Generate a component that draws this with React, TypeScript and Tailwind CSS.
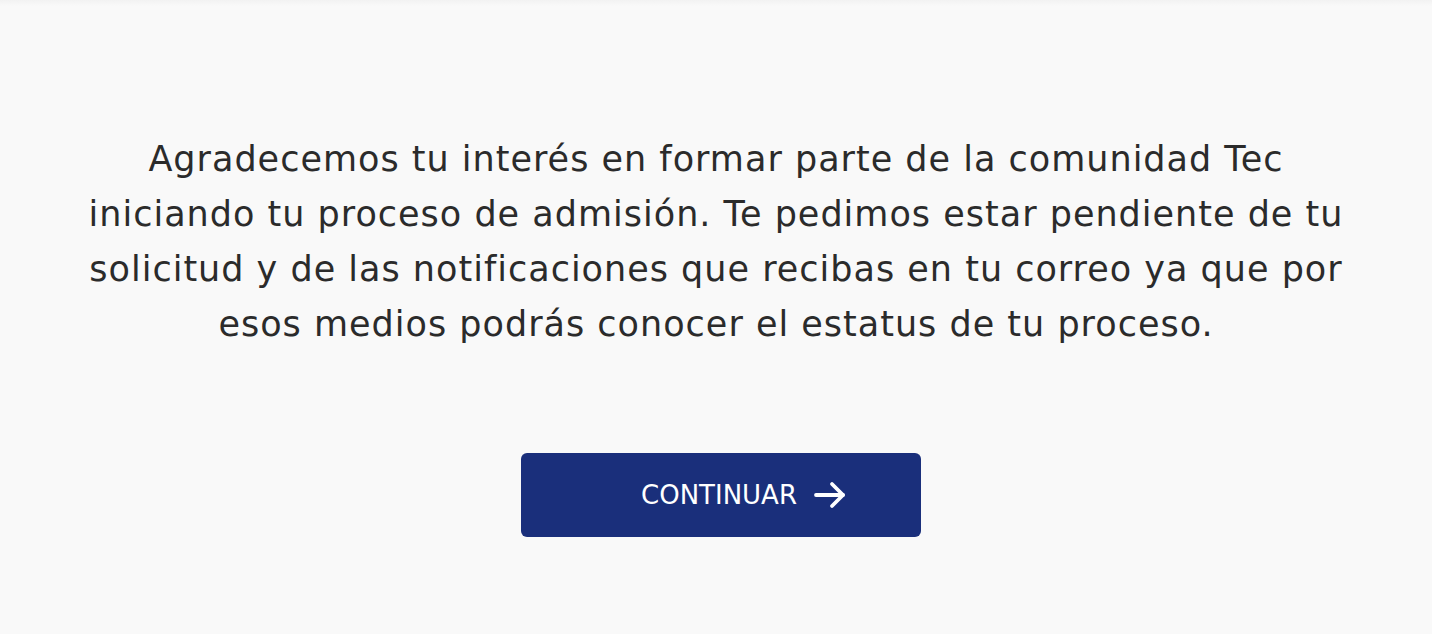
import React from "react";

export default function App() {
  const lines = [
    "Agradecemos tu interés en formar parte de la comunidad Tec",
    "iniciando tu proceso de admisión. Te pedimos estar pendiente de tu",
    "solicitud y de las notificaciones que recibas en tu correo ya que por",
    "esos medios podrás conocer el estatus de tu proceso.",
  ];
  return (
    <div
      className="relative w-[1432px] h-[634px] bg-[#f9f9f9] overflow-hidden"
      style={{ fontFamily: '"DejaVu Sans", "Noto Sans", sans-serif' }}
    >
      <div className="absolute top-0 left-0 right-0 h-[6px] bg-gradient-to-b from-[#f2f2f2] to-[#f9f9f9]" />
      <div className="flex flex-col items-center pt-[132px]">
        <p className="text-center text-[35px] leading-[55px] text-[#2b2b2b] tracking-[1px]">
          {lines.map((l, i) => (
            <span key={i} className="block whitespace-nowrap">
              {l}
            </span>
          ))}
        </p>
        <button className="mt-[101px] ml-[10px] w-[400px] h-[84px] rounded-[6px] bg-[#1a2f7b] flex items-center justify-center pl-[46px] gap-[16px] text-white">
          <span className="text-[26px] leading-none">CONTINUAR</span>
          <svg width="34" height="30" viewBox="0 0 34 30" fill="none" stroke="white" strokeWidth="3.8" strokeLinecap="round" strokeLinejoin="round">
            <path d="M3 15 H30" />
            <path d="M19 4 L30 15 L19 26" />
          </svg>
        </button>
      </div>
    </div>
  );
}
